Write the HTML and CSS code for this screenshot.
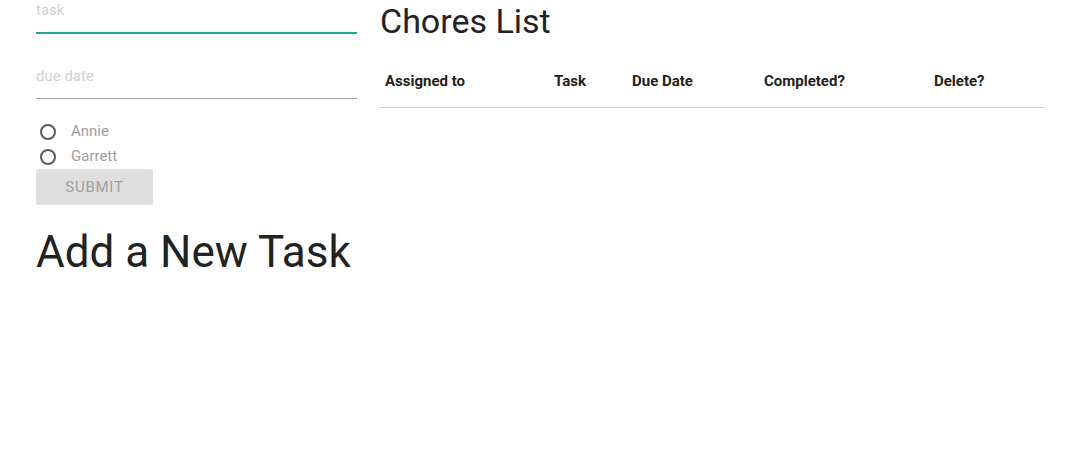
FILE: index.html
```html
<!DOCTYPE html>
<html lang="en">
<head>
<meta charset="utf-8">
<title>Chores</title>
<link rel="stylesheet" href="styles.css">
</head>
<body>
<div class="page">
  <section class="left">
    <form class="task-form">
      <input class="field field-focused" type="text" placeholder="task">
      <input class="field field-date" type="text" placeholder="due date">
      <div class="radios">
        <label class="radio"><input type="radio" name="who"><span class="dot"></span><span class="radio-text">Annie</span></label>
        <label class="radio"><input type="radio" name="who"><span class="dot"></span><span class="radio-text">Garrett</span></label>
      </div>
      <button class="btn-submit" type="button" disabled>Submit</button>
    </form>
    <h3 class="add-title">Add a New Task</h3>
  </section>
  <section class="right">
    <h4 class="list-title">Chores List</h4>
    <table class="chores">
      <thead>
        <tr>
          <th class="c-assigned">Assigned to</th>
          <th class="c-task">Task</th>
          <th class="c-due">Due Date</th>
          <th class="c-done">Completed?</th>
          <th class="c-del">Delete?</th>
        </tr>
      </thead>
      <tbody></tbody>
    </table>
  </section>
</div>
</body>
</html>
```

FILE: styles.css
```css
html, body {
  margin: 0;
  padding: 0;
  background: #fff;
}
body {
  font-family: Roboto, "Liberation Sans", Arial, sans-serif;
  font-size: 15px;
  line-height: 1.5;
  color: rgba(0, 0, 0, 0.87);
  overflow: hidden;
}
.page {
  display: flex;
  gap: 23px;
  padding-left: 36px;
}
.left {
  width: 321px;
  flex: none;
}
.task-form {
  display: flex;
  flex-direction: column;
  margin-top: -12px;
}
.field {
  display: block;
  box-sizing: content-box;
  width: 100%;
  height: 44px;
  padding: 0;
  margin: 0;
  border: none;
  border-bottom: 1px solid #9e9e9e;
  outline: none;
  background: transparent;
  font-family: Roboto, "Liberation Sans", Arial, sans-serif;
  font-size: 15px;
  color: rgba(0, 0, 0, 0.87);
}
.field::placeholder {
  color: #d1d1d1;
}
.field-focused {
  border-bottom: 1px solid #26a69a;
  box-shadow: 0 1px 0 0 #26a69a;
}
.field-date {
  margin-top: 21px;
}
.radios {
  display: flex;
  flex-direction: column;
  margin-top: 20px;
}
.radio {
  position: relative;
  display: flex;
  align-items: center;
  height: 25px;
  line-height: 25px;
  cursor: pointer;
}
.radio input {
  position: absolute;
  opacity: 0;
  pointer-events: none;
}
.dot {
  box-sizing: border-box;
  width: 16px;
  height: 16px;
  margin: 0 15px 0 4px;
  border: 2px solid #5a5a5a;
  border-radius: 50%;
  flex: none;
}
.radio-text {
  font-size: 15px;
  color: #9e9e9e;
}
.btn-submit {
  align-self: flex-start;
  width: 117px;
  height: 36px;
  padding: 0;
  border: none;
  border-radius: 2px;
  background: #dfdfdf;
  color: #9f9f9f;
  font-family: Roboto, "Liberation Sans", Arial, sans-serif;
  font-size: 15px;
  letter-spacing: 0.75px;
  text-transform: uppercase;
}
.add-title {
  margin: 23px 0 0;
  font-size: 44px;
  font-weight: 400;
  line-height: 110%;
  color: #222;
}
.right {
  width: 664px;
  flex: none;
}
.list-title {
  margin: 3px 0 14.6px;
  font-size: 34px;
  font-weight: 400;
  line-height: 110%;
  color: #222;
}
.chores {
  width: 100%;
  border-collapse: collapse;
  table-layout: fixed;
}
.chores tr {
  border-bottom: 1px solid rgba(0, 0, 0, 0.18);
}
.chores th {
  padding: 15px 5px 14px;
  text-align: left;
  font-size: 15px;
  font-weight: 700;
  color: #222;
}
.c-assigned { width: 159px; }
.c-task { width: 68px; }
.c-due { width: 122px; }
.c-done { width: 160px; }
.c-del { width: auto; }
```
